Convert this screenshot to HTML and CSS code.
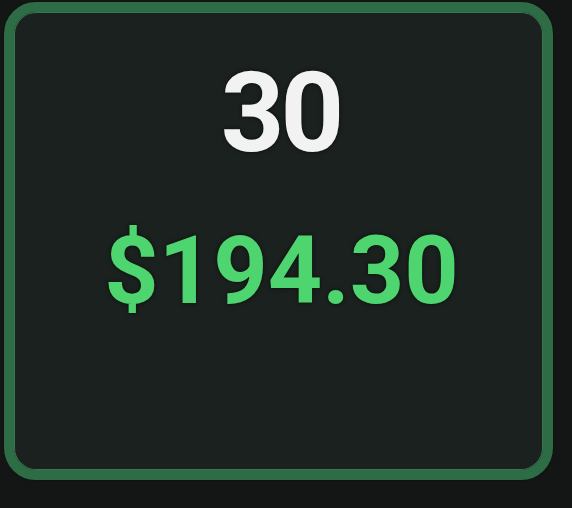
FILE: index.html
```html
<!DOCTYPE html>
<html>
<head>
<meta charset="utf-8">
<link rel="stylesheet" href="styles.css">
</head>
<body>
<div class="card">
  <div class="count">30</div>
  <div class="price">$194.30</div>
</div>
</body>
</html>
```

FILE: styles.css
```css
html, body {
  margin: 0;
  padding: 0;
  background: #131614;
  width: 572px;
  height: 508px;
  overflow: hidden;
}
.card {
  box-sizing: border-box;
  margin: 2px 0 0 4px;
  width: 549px;
  height: 478px;
  border: 10px solid #2e6c46;
  border-radius: 32px;
  background: #1a211e;
  box-shadow: inset 0 0 0 1px #367750, 0 0 2px #0c0f0d;
  display: flex;
  flex-direction: column;
  align-items: center;
  padding-top: 46px;
  font-family: Roboto, "Liberation Sans", sans-serif;
  font-weight: 700;
}
.count {
  font-size: 111px;
  line-height: 1;
  color: #f2f2f2;
  letter-spacing: -4px;
  margin-left: 4px;
  text-shadow: 0 0 4px rgba(0,0,0,0.6);
}
.price {
  margin-top: 54px;
  font-size: 95px;
  line-height: 1;
  color: #4fd56f;
  margin-left: 6px;
  text-shadow: 0 0 4px rgba(0,0,0,0.6);
}
```
